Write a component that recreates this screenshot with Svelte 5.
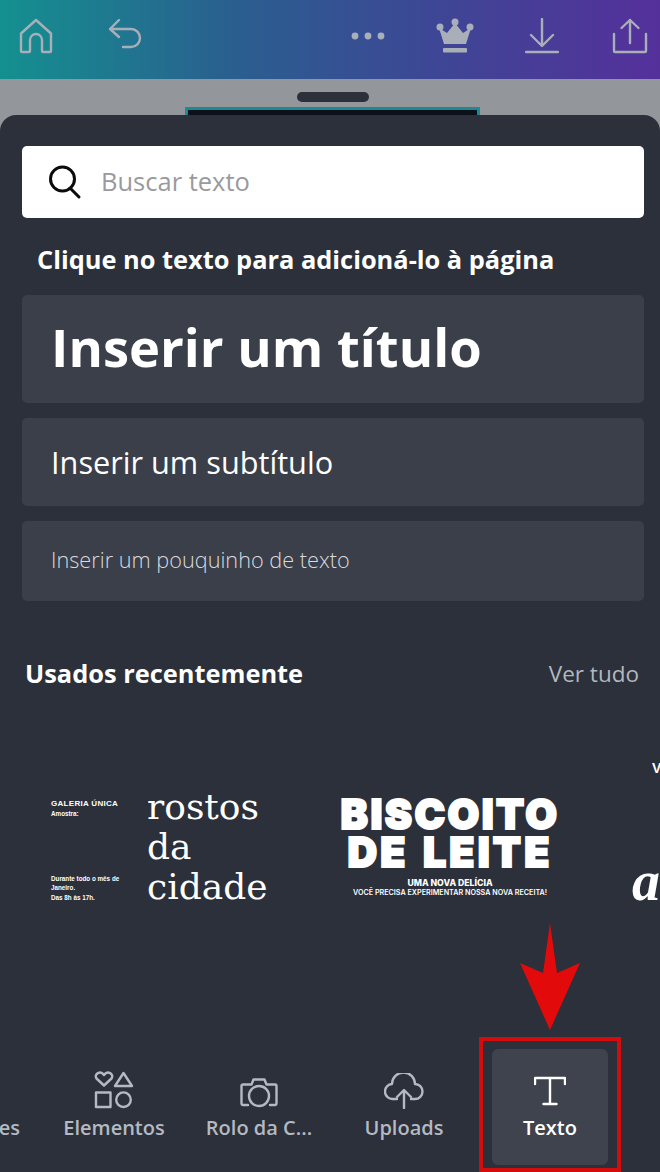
<script>
    const navItems = [
        { id: 'elementos', label: 'Elementos' },
        { id: 'rolo', label: 'Rolo da C...' },
        { id: 'uploads', label: 'Uploads' }
    ];
</script>

<div class="screen">
    <header class="topbar">
        <div class="group">
            <svg class="ico" width="36" height="36" viewBox="0 0 36 36">
                <path d="M3 15.500 18 2l15 13.500V33a1 1 0 0 1-1 1h-7a1 1 0 0 1-1-1V22a6 6 0 0 0-12 0v11a1 1 0 0 1-1 1H4a1 1 0 0 1-1-1z" />
            </svg>
            <svg class="ico undo" width="36" height="32" viewBox="0 0 36 32">
                <path d="M12 2 3 11l9 8M3 11h21a9 9 0 0 1 0 18h-8" />
            </svg>
        </div>
        <div class="group right">
            <svg class="dots" width="34" height="10" viewBox="0 0 34 10">
                <circle cx="4" cy="5" r="3.400" /><circle cx="17" cy="5" r="3.400" /><circle cx="30" cy="5" r="3.400" />
            </svg>
            <svg class="crown" width="38" height="36" viewBox="0 0 38 36">
                <circle cx="4" cy="9" r="3.500" /><circle cx="19" cy="4" r="3.500" /><circle cx="34" cy="9" r="3.500" />
                <path d="M3 10 11 15 19 5 27 15 35 10 30 26H8z" />
                <rect x="7" y="30" width="24" height="4.500" rx="1" />
            </svg>
            <svg class="ico" width="34" height="36" viewBox="0 0 34 36">
                <path d="M17 1v26M6 17l11 11 11-11M1 34h32" />
            </svg>
            <svg class="ico share" width="36" height="36" viewBox="0 0 36 36">
                <path d="M2 16v17a1 1 0 0 0 1 1h30a1 1 0 0 0 1-1V16M18 25V2M9.500 10 18 2l8.500 8" />
            </svg>
        </div>
    </header>

    <div class="stage">
        <div class="handle"></div>
        <div class="page"></div>
    </div>

    <section class="sheet">
        <div class="search">
            <svg class="lens" width="36" height="36" viewBox="0 0 36 36">
                <circle cx="15.500" cy="15" r="12" />
                <path d="m23 24 9 9" />
            </svg>
            <span>Buscar texto</span>
        </div>

        <h2 class="hint">Clique no texto para adicioná-lo à página</h2>

        <div class="row title">Inserir um título</div>
        <div class="row subtitle">Inserir um subtítulo</div>
        <div class="row small">Inserir um pouquinho de texto</div>

        <div class="recent-head">
            <h3>Usados recentemente</h3>
            <span>Ver tudo</span>
        </div>

        <div class="thumbs">
            <div class="thumb galeria">
                <div class="details">
                    <div>
                        <b>GALERIA ÚNICA</b>
                        <p>Amostra:</p>
                    </div>
                    <p>Durante todo o mês de Janeiro.<br />Das 8h às 17h.</p>
                </div>
                <div class="rostos">rostos<br />da<br />cidade</div>
            </div>
            <div class="thumb biscoito">
                <div class="big">BISCOITO</div>
                <div class="big second">DE LEITE</div>
                <div class="sub1">UMA NOVA DELÍCIA</div>
                <div class="sub2">VOCÊ PRECISA EXPERIMENTAR NOSSA NOVA RECEITA!</div>
            </div>
            <div class="thumb cut">
                <b>V</b>
                <i>a</i>
            </div>
        </div>

        <nav class="nav">
            <div class="tab edge"><span>es</span></div>
            {#each navItems as item}
                <div class="tab {item.id}">
                    {#if item.id === 'elementos'}
                        <svg class="ico" width="40" height="38" viewBox="0 0 40 38">
                            <path d="M10 13.500 2.500 6.500C-.5 2 6.500-2 10 3c3.500-5 10.500-1 7.500 3.500z" transform="translate(0 1)" />
                            <path d="M29.500 2 38 15H21z" />
                            <rect x="2" y="21.500" width="14.500" height="14.500" />
                            <circle cx="29.500" cy="28.700" r="7.300" />
                        </svg>
                    {:else if item.id === 'rolo'}
                        <svg class="ico" width="38" height="32" viewBox="0 0 38 32">
                            <path d="M8 28H3a1.500 1.500 0 0 1-1.500-1.500V9A1.500 1.500 0 0 1 3 7.500h8.500l2-5h11l2 5H35A1.500 1.500 0 0 1 36.500 9v17.500A1.500 1.500 0 0 1 35 28h-5" />
                            <circle cx="19" cy="19" r="10" />
                        </svg>
                    {:else}
                        <svg class="ico" width="40" height="36" viewBox="0 0 40 36">
                            <path d="M13 26H9A7.500 7.500 0 0 1 8 11 11.500 11.500 0 0 1 31 11a7.500 7.500 0 0 1 0 15h-4" />
                            <path d="M20 35V18M13 24l7-7 7 7" />
                        </svg>
                    {/if}
                    <span>{item.label}</span>
                </div>
            {/each}
            <div class="tab active">
                <svg class="ico" width="32" height="30" viewBox="0 0 32 30">
                    <path d="M1 8V2h30v6M16 2v26M9.500 28h13" />
                </svg>
                <span>Texto</span>
            </div>
        </nav>
    </section>

    <div class="mark"></div>
    <svg class="arrow" width="62" height="108" viewBox="0 0 62 108">
        <path d="M31 0 38 50 61 40 31 107 1 40 24 50z" />
    </svg>
</div>

<style>
    :global(body) {
        margin: 0;
        background: #2b303a;
    }

    .screen {
        position: relative;
        display: flex;
        flex-direction: column;
        width: 660px;
        height: 1172px;
        overflow: hidden;
        background: #93979c;
        font-family: "Open Sans", "Liberation Sans", sans-serif;
    }

    .topbar {
        display: flex;
        justify-content: space-between;
        align-items: center;
        flex: none;
        box-sizing: border-box;
        height: 79px;
        padding: 0 12px 8px 18px;
        background: linear-gradient(90deg, #14908f 0%, #2a5f8f 35%, #3d4795 65%, #55309b 100%);
    }

    .group {
        display: flex;
        align-items: center;
        gap: 53px;
    }

    .group.right {
        gap: 51px;
    }

    .ico {
        fill: none;
        stroke: currentColor;
        stroke-width: 2.400;
        stroke-linejoin: round;
        stroke-linecap: round;
    }

    .topbar .ico {
        color: #a9afb9;
    }

    .undo {
        margin-top: -4px;
    }

    .share {
        margin-left: 2px;
    }

    .dots,
    .crown {
        fill: #a9afb9;
    }

    .stage {
        display: flex;
        flex-direction: column;
        align-items: center;
        flex: none;
        box-sizing: border-box;
        height: 36px;
        padding: 13px 0 0 5px;
        overflow: hidden;
    }

    .handle {
        flex: none;
        width: 72px;
        height: 10px;
        background: #2b303a;
        border-radius: 5px;
    }

    .page {
        flex: none;
        box-sizing: border-box;
        width: 295px;
        height: 30px;
        margin-top: 5px;
        background: #0c1119;
        border: 3px solid #1b8a92;
    }

    .sheet {
        position: relative;
        display: flex;
        flex-direction: column;
        flex: 1;
        min-height: 0;
        padding: 31px 16px 7px 22px;
        background: #2b303a;
        border-radius: 16px 16px 0 0;
        color: #fff;
    }

    .search {
        display: flex;
        align-items: center;
        gap: 18px;
        flex: none;
        height: 72px;
        padding-left: 25px;
        background: #fff;
        border-radius: 5px;
        color: #9a9a9d;
        font-size: 25.500px;
    }

    .search span {
        margin-top: -3px;
    }

    .lens {
        fill: none;
        stroke: #0b0b0b;
        stroke-width: 3;
        stroke-linecap: round;
    }

    .hint {
        margin: 23px 0 18px 15px;
        font-size: 25.400px;
        line-height: 36px;
        font-weight: 700;
    }

    .row {
        display: flex;
        align-items: center;
        flex: none;
        box-sizing: border-box;
        margin-bottom: 15px;
        padding-left: 29px;
        background: #3a3f4a;
        border-radius: 5px;
    }

    .row.title {
        height: 108px;
        padding-bottom: 5px;
        font-size: 52.500px;
        font-weight: 700;
    }

    .row.subtitle {
        height: 88px;
        font-size: 30.700px;
    }

    .row.small {
        height: 80px;
        padding-bottom: 3px;
        font-size: 21.700px;
        font-weight: 300;
        color: #d9dbdf;
    }

    .recent-head {
        display: flex;
        justify-content: space-between;
        align-items: center;
        flex: none;
        margin: 22px 5px 0 3px;
        height: 70px;
    }

    .recent-head h3 {
        margin: 0;
        font-size: 25.400px;
        font-weight: 700;
    }

    .recent-head span {
        font-size: 22.500px;
        color: #b3b7be;
    }

    .thumbs {
        display: flex;
        flex: none;
        height: 200px;
        margin-top: 47px;
        margin-right: -16px;
        overflow: hidden;
    }

    .thumb {
        flex: none;
        box-sizing: border-box;
    }

    .galeria {
        display: flex;
        width: 290px;
        height: 113px;
        margin-top: 39px;
        padding-left: 29px;
        font-family: "Liberation Sans", Arial, sans-serif;
    }

    .details {
        display: flex;
        flex-direction: column;
        justify-content: space-between;
        box-sizing: border-box;
        width: 96px;
        padding: 4px 0 5px;
        font-size: 6.300px;
        line-height: 9.500px;
        font-weight: 700;
    }

    .details b {
        display: block;
        font-size: 8px;
        line-height: 11px;
        letter-spacing: .3px;
    }

    .details p {
        margin: 0;
        max-width: 72px;
    }

    .rostos {
        margin-top: -7px;
        font-family: "DejaVu Serif", "Liberation Serif", serif;
        font-size: 36px;
        line-height: 40px;
    }

    .biscoito {
        width: 258px;
        margin-left: 9px;
        margin-top: 40px;
        text-align: center;
        font-family: Inter, "Liberation Sans", sans-serif;
    }

    .big {
        font-size: 41px;
        line-height: 38px;
        font-weight: 900;
        letter-spacing: 2.400px;
        white-space: nowrap;
        -webkit-text-stroke: 2px #fff;
    }

    .big.second {
        letter-spacing: 3.200px;
        word-spacing: 3px;
    }

    .sub1 {
        margin-top: 7px;
        font-size: 8.700px;
        line-height: 10px;
        font-weight: 800;
    }

    .sub2 {
        font-size: 7.200px;
        line-height: 9px;
        font-weight: 600;
        white-space: nowrap;
    }

    .cut {
        position: relative;
        width: 90px;
        height: 200px;
    }

    .cut b {
        position: absolute;
        left: 73px;
        top: 5px;
        font-size: 14px;
        font-family: "Liberation Sans", sans-serif;
    }

    .cut i {
        position: absolute;
        left: 53px;
        top: 96px;
        font-size: 56px;
        line-height: 60px;
        font-weight: 700;
        font-family: "Liberation Serif", serif;
    }

    .nav {
        display: flex;
        flex: none;
        height: 116px;
        margin: auto -16px 0 -22px;
        align-items: stretch;
    }

    .tab {
        display: flex;
        flex-direction: column;
        align-items: center;
        justify-content: flex-end;
        flex: none;
        box-sizing: border-box;
        padding-bottom: 24px;
        font-size: 20px;
        font-weight: 600;
        line-height: 26px;
        color: #b5b9c1;
    }

    .tab .ico {
        margin-bottom: 6px;
    }

    .tab.edge {
        width: 20px;
        align-items: flex-end;
    }

    .tab.elementos {
        width: 102px;
        margin-left: 43px;
    }

    .tab.rolo {
        width: 108px;
        margin-left: 40px;
    }

    .tab.uploads {
        width: 80px;
        margin-left: 51px;
    }

    .tab.active {
        width: 116px;
        height: 116px;
        margin-left: 48px;
        background: #3e434d;
        border-radius: 6px;
        color: #fff;
    }

    .tab.active .ico {
        margin-bottom: 9px;
    }

    .mark {
        position: absolute;
        left: 479px;
        top: 1037px;
        box-sizing: border-box;
        width: 142px;
        height: 135px;
        border: 4px solid #d40c0c;
    }

    .arrow {
        position: absolute;
        left: 519px;
        top: 923px;
        fill: #e20a0a;
    }
</style>
